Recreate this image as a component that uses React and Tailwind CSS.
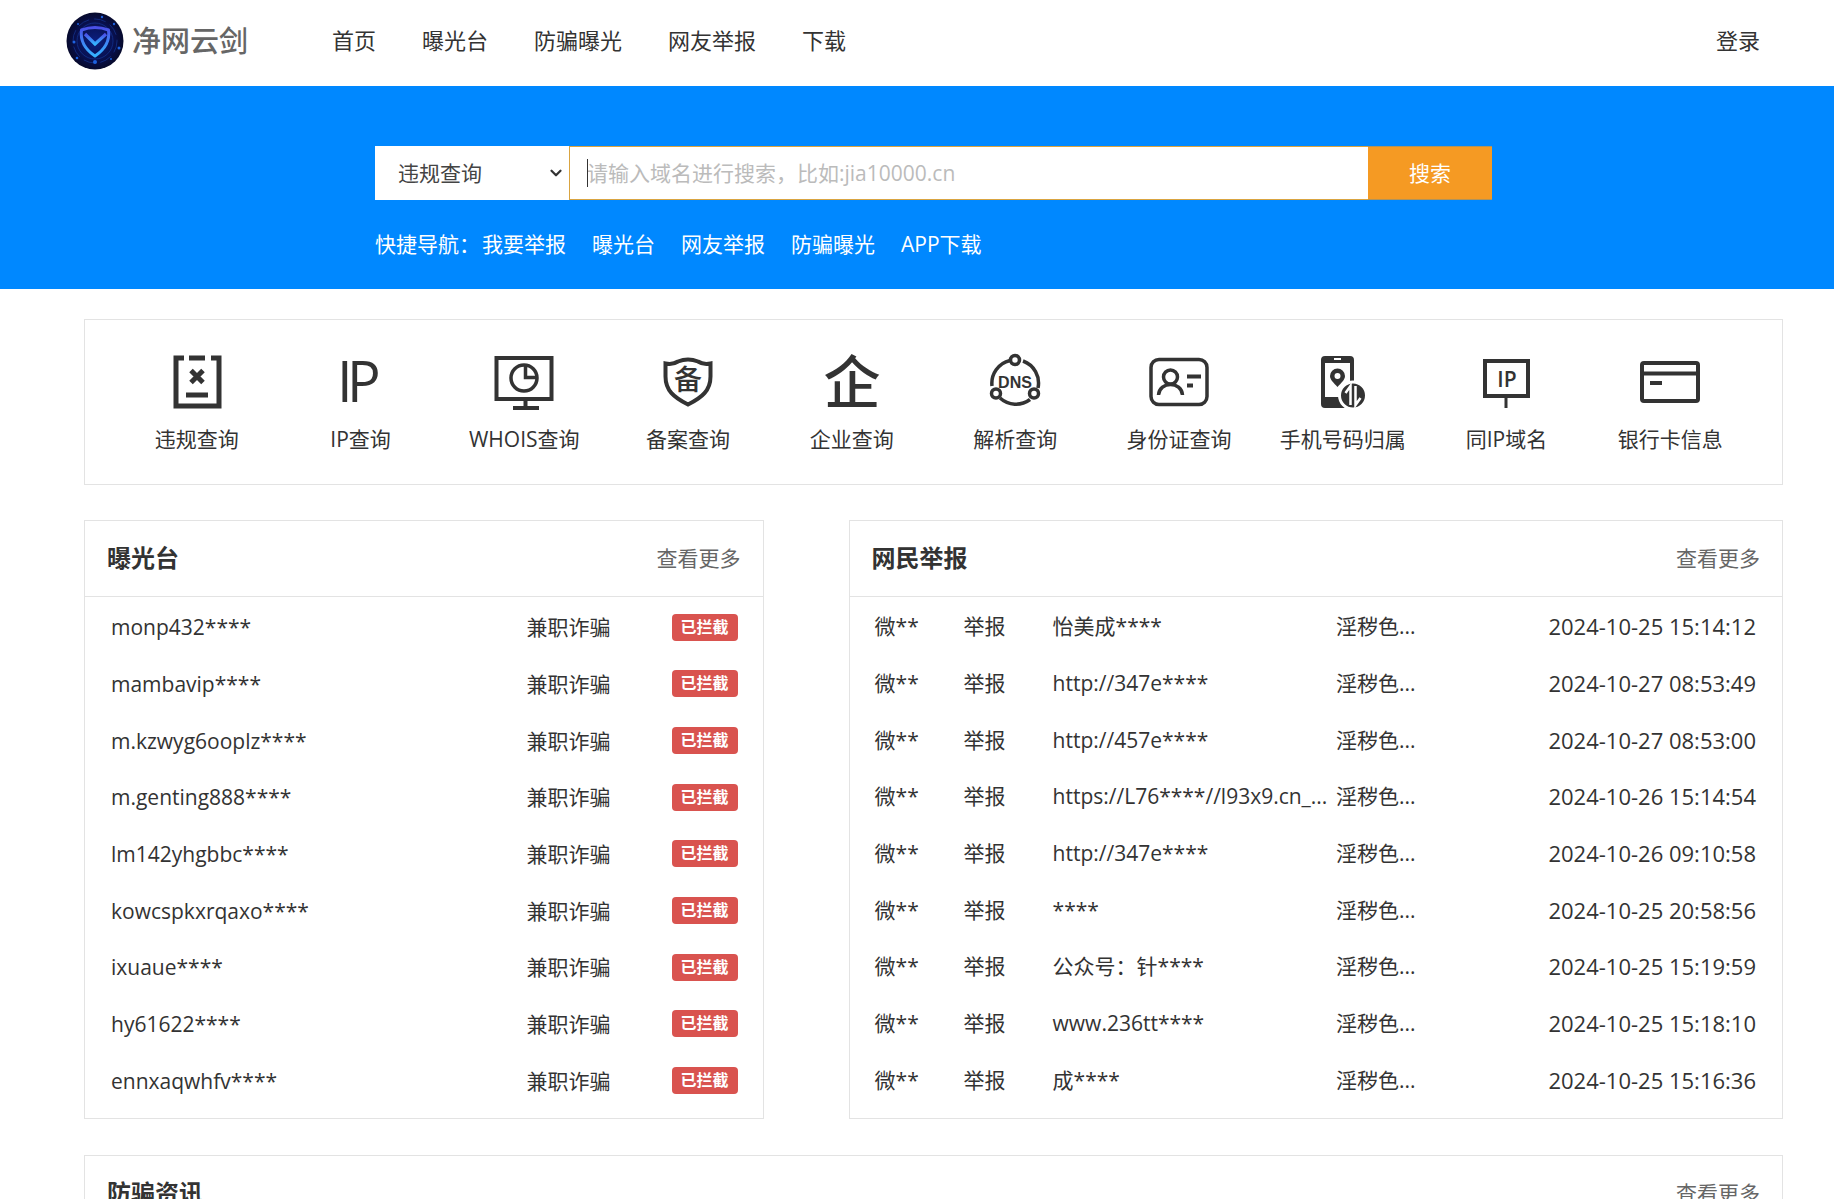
import { useState } from 'react';
import { ChevronDown } from 'lucide-react';

const NAV_ITEMS = ['首页', '曝光台', '防骗曝光', '网友举报', '下载'];

const QUICK_LINKS = ['我要举报', '曝光台', '网友举报', '防骗曝光', 'APP下载'];

const EXPOSED = [
  'monp432****',
  'mambavip****',
  'm.kzwyg6ooplz****',
  'm.genting888****',
  'lm142yhgbbc****',
  'kowcspkxrqaxo****',
  'ixuaue****',
  'hy61622****',
  'ennxaqwhfv****',
];

const REPORTS = [
  { target: '怡美成****', time: '2024-10-25 15:14:12' },
  { target: 'http://347e****', time: '2024-10-27 08:53:49' },
  { target: 'http://457e****', time: '2024-10-27 08:53:00' },
  { target: 'https://L76****//l93x9.cn_...', time: '2024-10-26 15:14:54' },
  { target: 'http://347e****', time: '2024-10-26 09:10:58' },
  { target: '****', time: '2024-10-25 20:58:56' },
  { target: '公众号：针****', time: '2024-10-25 15:19:59' },
  { target: 'www.236tt****', time: '2024-10-25 15:18:10' },
  { target: '成****', time: '2024-10-25 15:16:36' },
];

function Icon({ children }) {
  return (
    <svg viewBox="0 0 64 60" className="w-16 h-[60px] overflow-visible" fill="none" stroke="#333" strokeWidth="4" aria-hidden="true">
      {children}
    </svg>
  );
}

const TOOLS = [
  {
    label: '违规查询',
    icon: (
      <Icon>
        <path strokeWidth="5" d="M19 6h-8v48h43V6h-8M24 6h16M21 43h22" />
        <path strokeWidth="5" d="M26 18.500l12 12M38 18.500l-12 12" />
      </Icon>
    ),
  },
  {
    label: 'IP查询',
    icon: (
      <Icon>
        <text x="8 18" y="50" fontSize="56" fill="#333" stroke="none" className="font-['Open_Sans',sans-serif] font-medium">IP</text>
      </Icon>
    ),
  },
  {
    label: 'WHOIS查询',
    icon: (
      <Icon>
        <rect x="4.500" y="6" width="55" height="41" />
        <circle cx="32" cy="26" r="13" strokeWidth="3.500" />
        <path strokeWidth="3.500" d="M33.500 13v12.500H45" />
        <path d="M33.500 48v8M21 56h26" />
      </Icon>
    ),
  },
  {
    label: '备案查询',
    icon: (
      <Icon>
        <path d="M9.500 11.500c5 1 9.500 0 12.500-2 6-2.500 14-2.500 20 0 3 2 7.500 3 12.500 2v13c0 14-8.500 21-22.500 28-14-7-22.500-14-22.500-28z" />
        <text x="32" y="38" textAnchor="middle" fontSize="28" fill="#333" stroke="none" className="font-['Noto_Sans_CJK_SC',sans-serif] font-medium">备</text>
      </Icon>
    ),
  },
  {
    label: '企业查询',
    icon: (
      <Icon>
        <text x="32" y="51" textAnchor="middle" fontSize="57" fill="#333" stroke="none" className="font-['Noto_Sans_CJK_SC',sans-serif] font-medium">企</text>
      </Icon>
    ),
  },
  {
    label: '解析查询',
    icon: (
      <Icon>
        <g strokeWidth="3.500">
          <circle cx="32" cy="8" r="4.500" />
          <circle cx="13" cy="41.500" r="4.500" />
          <circle cx="51" cy="41.500" r="4.500" />
          <path d="M9 34A23.500 23.500 0 0 1 27 8.500M40 9A23.500 23.500 0 0 1 55 36M17 46A23.500 23.500 0 0 0 47 47.500" />
        </g>
        <text x="32" y="36" textAnchor="middle" fontSize="16" fontWeight="700" fill="#333" stroke="none" className="font-['Liberation_Sans',sans-serif]">DNS</text>
      </Icon>
    ),
  },
  {
    label: '身份证查询',
    icon: (
      <Icon>
        <rect x="4" y="7.500" width="56" height="45" rx="8" strokeWidth="3.500" />
        <circle cx="23.500" cy="25" r="7" strokeWidth="3.500" />
        <path strokeWidth="3.500" d="M11.500 43c1-14 23-14 24 0" />
        <path d="M40 24.500h14M40 33.500h6" />
      </Icon>
    ),
  },
  {
    label: '手机号码归属',
    icon: (
      <Icon>
        <path fill="#333" fillRule="evenodd" stroke="none" d="M14 4h25a4 4 0 0 1 4 4v48H14a4 4 0 0 1-4-4V8a4 4 0 0 1 4-4zm0 7v34h25V11zM23 6v2h7V6z" />
        <path fill="#333" fillRule="evenodd" stroke="none" d="M26.500 16.500a7.500 7.500 0 0 0-7.500 7.500c0 4 4 7 7.500 11 3.500-4 7.500-7 7.500-11a7.500 7.500 0 0 0-7.500-7.500zm0 4.500a3 3 0 1 1 0 6 3 3 0 0 1 0-6z" />
        <circle cx="42" cy="43.500" r="13.500" fill="#333" stroke="#fff" strokeWidth="3" />
        <path stroke="#fff" strokeWidth="2.500" d="M39.500 53V34l-5 7M44.500 34v19l5-7" />
      </Icon>
    ),
  },
  {
    label: '同IP域名',
    icon: (
      <Icon>
        <rect x="11" y="9" width="43" height="35" strokeWidth="4" />
        <path strokeWidth="3" d="M32 45v11" />
        <text x="33" y="35" textAnchor="middle" fontSize="21" fontWeight="600" fill="#333" stroke="none" className="font-['Open_Sans',sans-serif]">IP</text>
      </Icon>
    ),
  },
  {
    label: '银行卡信息',
    icon: (
      <Icon>
        <rect x="4" y="11" width="56" height="38" rx="2" />
        <path d="M4 21.500h56M12 31h12" />
      </Icon>
    ),
  },
];

function Logo() {
  return (
    <a href="#" className="flex items-center gap-2">
      <svg viewBox="0 0 58 58" className="size-[58px]" aria-hidden="true">
        <defs>
          <radialGradient id="disc">
            <stop offset="0" stopColor="#0b1f80" />
            <stop offset="0.700" stopColor="#080f4c" />
            <stop offset="1" stopColor="#070a2c" />
          </radialGradient>
          <linearGradient id="shield" x1="0" y1="0" x2="0" y2="1">
            <stop offset="0" stopColor="#4a4fe8" />
            <stop offset="1" stopColor="#35b4ff" />
          </linearGradient>
        </defs>
        <circle cx="29" cy="29" r="28.500" fill="url(#disc)" />
        <g fill="none" stroke="#153a9c" strokeWidth="0.800" opacity="0.800">
          <circle cx="29" cy="29" r="18" />
          <circle cx="29" cy="29" r="22" strokeDasharray="12 5" />
        </g>
        <g fill="#1e62e0">
          <circle cx="8" cy="30" r="1.500" />
          <circle cx="12" cy="12" r="1" />
          <circle cx="36" cy="5" r="1.200" />
          <circle cx="48" cy="12" r="1.200" />
          <circle cx="53" cy="36" r="1.500" />
          <circle cx="11" cy="46" r="1.300" />
          <circle cx="29" cy="50" r="2" />
          <circle cx="45" cy="47" r="1" />
        </g>
        <path d="M15.500 18q13.500-5 27 0c1.500 11-3 19-13.500 26-10.500-7-15-15-13.500-26z" fill="none" stroke="url(#shield)" strokeWidth="3" strokeLinejoin="round" />
        <path d="M19 22l10 10 11-10" fill="none" stroke="url(#shield)" strokeWidth="3.200" />
      </svg>
      <span className="text-[29px] leading-10 font-medium text-[#666]">净网云剑</span>
    </a>
  );
}

function Panel({ title, children }) {
  return (
    <section className="border border-[#e3e3e3]">
      <div className="flex items-center justify-between h-[76px] px-[22px] pb-px border-b border-[#e3e3e3]">
        <h2 className="text-2xl font-bold">{title}</h2>
        <a href="#" className="text-[21px] text-[#666]">查看更多</a>
      </div>
      {children}
    </section>
  );
}

export default function App() {
  const [type, setType] = useState('违规查询');
  const [keyword, setKeyword] = useState('');

  return (
    <div className="bg-white text-[#333] text-[21px] leading-7 font-['Open_Sans','Noto_Sans_CJK_SC',sans-serif]">
      {/* Header */}
      <header className="flex items-center h-[86px] pl-[66px] pr-[74px] pb-1">
        <Logo />
        <nav className="flex gap-[46px] ml-[84px] pb-0.5 text-[22px]">
          {NAV_ITEMS.map(item => (
            <a key={item} href="#">{item}</a>
          ))}
        </nav>
        <a href="#" className="ml-auto pb-0.5 text-[22px]">登录</a>
      </header>

      {/* Search */}
      <div className="bg-[#08f] pl-[33px] pt-[60px] pb-[31px]">
        <div className="max-w-[1117px] mx-auto">
          <form className="flex h-[54px]" onSubmit={(e) => e.preventDefault()}>
            <div className="relative w-[194px] bg-white">
              <select
                value={type}
                onChange={(e) => setType(e.target.value)}
                aria-label="查询类型"
                className="w-full h-full pl-[23px] pr-8 appearance-none text-[#444] outline-none"
              >
                {TOOLS.map(tool => (
                  <option key={tool.label}>{tool.label}</option>
                ))}
              </select>
              <ChevronDown className="absolute right-1 top-[18px] size-[18px] text-[#333] pointer-events-none" strokeWidth={3} />
            </div>
            <div className="relative flex-1">
              <input
                type="text"
                value={keyword}
                onChange={(e) => setKeyword(e.target.value)}
                placeholder="请输入域名进行搜索，比如:jia10000.cn"
                aria-label="搜索域名"
                className="w-full h-full px-[17px] bg-white border border-r-0 border-[#d9a441] outline-none placeholder:text-[#bbb]"
              />
              {!keyword && <span className="absolute left-[18px] top-[13px] w-px h-7 bg-[#333]" />}
            </div>
            <button type="submit" className="w-[124px] bg-[#f59a23] border-y border-[#b0935a] text-white">
              搜索
            </button>
          </form>
          <div className="flex gap-[26px] mt-[30px] text-white">
            <span className="-mr-6">快捷导航：</span>
            {QUICK_LINKS.map(link => (
              <a key={link} href="#">{link}</a>
            ))}
          </div>
        </div>
      </div>

      <main className="pl-[84px] pr-[51px] pt-[30px]">
        {/* Tools */}
        <div className="grid grid-cols-10 border border-[#e3e3e3] px-[30px] pt-8 pb-[31px]">
          {TOOLS.map(tool => (
            <a key={tool.label} href="#" className="flex flex-col items-center gap-[13px] whitespace-nowrap">
              {tool.icon}
              <span>{tool.label}</span>
            </a>
          ))}
        </div>

        <div className="grid grid-cols-[40%_55%] justify-between mt-[35px]">
          <Panel title="曝光台">
            <div className="pt-[2px] pb-[9px]">
              <table className="w-full h-[510px] table-fixed">
                <tbody>
                  {EXPOSED.map(name => (
                    <tr key={name}>
                      <td className="pl-[26px]">{name}</td>
                      <td className="w-[145px]">兼职诈骗</td>
                      <td className="w-[91px]">
                        <span className="block w-[66px] h-[27px] rounded bg-[#d9534f] text-center text-base leading-[27px] font-bold text-white">
                          已拦截
                        </span>
                      </td>
                    </tr>
                  ))}
                </tbody>
              </table>
            </div>
          </Panel>

          <Panel title="网民举报">
            <div className="pt-px pb-2.5">
              <table className="w-full h-[510px] table-fixed whitespace-nowrap">
                <tbody>
                  {REPORTS.map(report => (
                    <tr key={report.time}>
                      <td className="w-[114px] pl-[25px]">微**</td>
                      <td className="w-[89px]">举报</td>
                      <td>{report.target}</td>
                      <td className="w-[180px]">淫秽色...</td>
                      <td className="w-[266px] pr-[26px] text-right text-[22px]">{report.time}</td>
                    </tr>
                  ))}
                </tbody>
              </table>
            </div>
          </Panel>
        </div>

        <div className="mt-9">
          <Panel title="防骗资讯" />
        </div>
      </main>
    </div>
  );
}
